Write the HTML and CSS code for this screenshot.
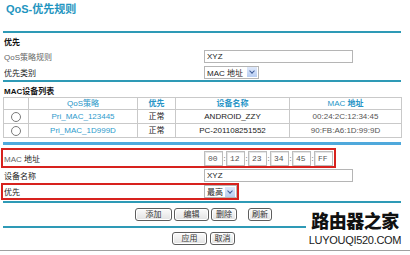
FILE: index.html
```html
<html lang="zh-CN">
	<head>
		<meta charset="UTF-8" />
		<title>QoS-优先规则</title>
		<link rel="stylesheet" href="styles.css">
	</head>

	<body>
		<div class="page">
			<h1 class="title">QoS-优先规则</h1>
			<div class="rule"></div>

			<div class="section-title">优先</div>
			<div class="row">
				<span class="label muted">QoS策略规则</span>
				<span class="field field-text">XYZ</span>
			</div>
			<div class="row">
				<span class="label">优先类别</span>
				<span class="field field-select sel-type">MAC 地址<span class="arrow"></span></span>
			</div>
			<div class="rule"></div>

			<div class="section-title">MAC设备列表</div>
			<table class="list">
				<thead>
					<tr>
						<th class="col-radio"></th>
						<th class="col-name thin">QoS策略</th>
						<th class="col-prio">优先</th>
						<th class="col-dev">设备名称</th>
						<th class="col-mac"><span class="thin">MAC</span> 地址</th>
					</tr>
				</thead>
				<tbody>
					<tr>
						<td><span class="radio"></span></td>
						<td class="link">Pri_MAC_123445</td>
						<td>正常</td>
						<td>ANDROID_ZZY</td>
						<td class="mac">00:24:2C:12:34:45</td>
					</tr>
					<tr>
						<td><span class="radio"></span></td>
						<td class="link">Pri_MAC_1D999D</td>
						<td>正常</td>
						<td>PC-201108251552</td>
						<td class="mac">90:FB:A6:1D:99:9D</td>
					</tr>
				</tbody>
			</table>
			<div class="rule rule-blue"></div>

			<div class="row mark mark-mac">
				<span class="label"><span class="muted">MAC</span> 地址</span>
				<span class="mac-inputs">
					<span class="octet">00</span>
					<span class="sep">:</span><span class="octet">12</span>
					<span class="sep">:</span><span class="octet">23</span>
					<span class="sep">:</span><span class="octet">34</span>
					<span class="sep">:</span><span class="octet">45</span>
					<span class="sep">:</span><span class="octet">FF</span>
				</span>
			</div>
			<div class="row row-name">
				<span class="label">设备名称</span>
				<span class="field field-text">XYZ</span>
			</div>
			<div class="row mark mark-prio">
				<span class="label">优先</span>
				<span class="field field-select sel-prio">最高<span class="arrow"></span></span>
			</div>
			<div class="rule rule-tight"></div>

			<div class="buttons buttons-list">
				<button class="btn w37">添加</button>
				<button class="btn w35">编辑</button>
				<button class="btn w26">删除</button>
				<button class="btn w24 far">刷新</button>
			</div>
			<div class="rule"></div>
			<div class="buttons buttons-apply">
				<button class="btn w35">应用</button>
				<button class="btn w25">取消</button>
			</div>
		</div>
		<div class="bottom-line"></div>

		<div class="watermark">
			<div class="wm-cn">路由器之家</div>
			<div class="wm-en">LUYOUQI520.COM</div>
		</div>
	</body>
</html>
```

FILE: styles.css
```css
body {
	margin: 0;
	width: 410px;
	height: 255px;
	overflow: hidden;
	position: relative;
	background: #fff;
	font-family: 'Liberation Sans', 'Noto Sans CJK SC', sans-serif;
	font-size: 8px;
	color: #222;
}

.page {
	padding: 0 9px 0 3px;
}

.title {
	margin: 0;
	height: 31px;
	padding: 2px 0 0 3px;
	box-sizing: border-box;
	font-size: 11px;
	line-height: 14px;
	color: #1f95c0;
	font-weight: bold;
}

.rule {
	height: 2px;
	background: #2e9ab6;
}

.rule-blue {
	height: 3px;
	margin-top: 4px;
	background: #4fa9dc;
}

.rule-tight {
	margin-top: 1px;
}

.section-title {
	height: 15px;
	line-height: 15px;
	padding: 2px 0 0 1px;
	box-sizing: border-box;
	font-weight: bold;
	color: #111;
}

.row {
	display: flex;
	align-items: center;
	height: 16px;
}

.label {
	width: 200px;
	padding-left: 1px;
	flex-shrink: 0;
	color: #222;
}

.muted {
	color: #666;
}

.field {
	display: flex;
	align-items: center;
	box-sizing: border-box;
	height: 13px;
	border: 1px solid #b5b5b5;
	background: #fff;
	color: #222;
	padding-left: 2px;
}

.field-text {
	width: 149px;
}

.field-select {
	padding-right: 1px;
	justify-content: space-between;
}

.sel-type {
	width: 55px;
}

.sel-prio {
	width: 33px;
}

.arrow {
	position: relative;
	width: 10px;
	height: 10px;
	background: linear-gradient(#dfe9fb, #b7cdf2);
}

.arrow:after {
	content: '';
	position: absolute;
	left: 3px;
	top: 2px;
	width: 3px;
	height: 3px;
	border-right: 1px solid #3d5a96;
	border-bottom: 1px solid #3d5a96;
	transform: rotate(45deg);
}

.list {
	width: 399px;
	border-collapse: collapse;
	table-layout: fixed;
	font-size: 8px;
	line-height: 10px;
}

.list th,
.list td {
	border: 1px solid #c9c9c9;
	padding: 0;
	text-align: center;
	white-space: nowrap;
	overflow: hidden;
}

.list thead tr {
	height: 12px;
}

.list tbody tr {
	height: 14px;
}

.list th {
	color: #2694c6;
	font-weight: bold;
}

.list .thin {
	font-weight: normal;
}

.col-radio { width: 24px; }
.col-name { width: 108px; }
.col-prio { width: 37px; }
.col-dev { width: 113px; }

.list .link {
	color: #2e9bcc;
}

.list td {
	color: #222;
}

.list .mac {
	color: #555;
}

.radio {
	display: inline-block;
	width: 8px;
	height: 8px;
	border: 1px solid #7a7a7a;
	border-radius: 50%;
	background: #fff;
	vertical-align: middle;
}

.mark {
	box-sizing: border-box;
	margin-left: -2px;
	border: 2px solid #d7221e;
}

.mark-mac {
	margin-top: 3px;
	width: 335px;
	height: 20px;
}

.mark-prio {
	width: 238px;
	height: 17px;
}

.row-name {
	height: 15px;
}

.mac-inputs {
	display: flex;
	align-items: center;
}

.octet {
	box-sizing: border-box;
	width: 19px;
	height: 15px;
	line-height: 13px;
	border: 1px solid #bdbdbd;
	box-shadow: inset 1px 1px 0 #e6e6e6;
	padding-left: 3px;
	font-family: 'Liberation Mono', monospace;
	font-size: 8px;
	color: #555;
}

.sep {
	width: 3px;
	text-align: center;
	font-size: 7px;
	color: #333;
}

.buttons {
	display: flex;
	align-items: center;
}

.buttons-list {
	height: 23px;
	padding-left: 132px;
	gap: 2px;
}

.buttons-apply {
	height: 21px;
	padding-left: 169px;
	gap: 3px;
}

.btn {
	box-sizing: border-box;
	height: 13px;
	padding: 0;
	border: 1px solid #5d5d5d;
	border-radius: 3px;
	background: linear-gradient(#fbfbfb, #e2e2e2);
	box-shadow: inset 0 0 0 1px #fff;
	font-family: 'Liberation Sans', 'Noto Sans CJK SC', sans-serif;
	font-size: 8px;
	line-height: 11px;
	color: #333;
}

.btn.far {
	margin-left: 9px;
}

.w37 { width: 37px; }
.w35 { width: 35px; }
.w26 { width: 26px; }
.w25 { width: 25px; }
.w24 { width: 24px; }

.bottom-line {
	margin-top: 1px;
	height: 1px;
	background: #a0a0a0;
}

.watermark {
	position: absolute;
	left: 306px;
	top: 209px;
	width: 98px;
	background: #fff;
	text-align: center;
}

.wm-cn {
	font-family: 'Noto Sans CJK SC', sans-serif;
	font-weight: 900;
	font-size: 18px;
	line-height: 22px;
	color: #111;
	letter-spacing: -0.5px;
}

.wm-en {
	margin-top: 3px;
	font-family: 'Liberation Sans', sans-serif;
	font-size: 11px;
	line-height: 13px;
	letter-spacing: -0.3px;
	color: #1a1a1a;
}
```
